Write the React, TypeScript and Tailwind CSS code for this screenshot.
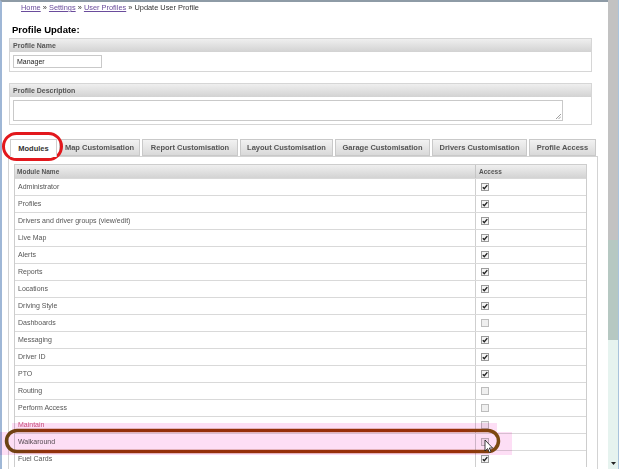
import React from 'react';

const ROWS: { name: string; on: boolean; tone?: string }[] = [
  { name: 'Administrator', on: true },
  { name: 'Profiles', on: true },
  { name: 'Drivers and driver groups (view/edit)', on: true },
  { name: 'Live Map', on: true },
  { name: 'Alerts', on: true },
  { name: 'Reports', on: true },
  { name: 'Locations', on: true },
  { name: 'Driving Style', on: true },
  { name: 'Dashboards', on: false },
  { name: 'Messaging', on: true },
  { name: 'Driver ID', on: true },
  { name: 'PTO', on: true },
  { name: 'Routing', on: false },
  { name: 'Perform Access', on: false },
  { name: 'Maintain', on: false, tone: 'text-[#c9587f]' },
  { name: 'Walkaround', on: false },
  { name: 'Fuel Cards', on: true },
];

const TABS = [
  { label: 'Modules', w: 'w-[47px]', active: true },
  { label: 'Map Customisation', w: 'w-[81px]' },
  { label: 'Report Customisation', w: 'w-[96px]' },
  { label: 'Layout Customisation', w: 'w-[93px]' },
  { label: 'Garage Customisation', w: 'w-[95px]' },
  { label: 'Drivers Customisation', w: 'w-[95px]' },
  { label: 'Profile Access', w: 'w-[67px]' },
];

function Box({ on }: { on: boolean }) {
  return (
    <svg width="8" height="8" viewBox="0 0 8 8" className="block">
      <rect x="0.5" y="0.5" width="7" height="7" fill={on ? '#f4f4f4' : '#efefef'} stroke={on ? '#9a9a9a' : '#bdbdbd'} />
      {on && <path d="M1.8 4.2 L3.3 5.8 L6.3 2.1" fill="none" stroke="#222" strokeWidth="1.4" />}
    </svg>
  );
}

function PanelHead({ children }: { children: React.ReactNode }) {
  return (
    <div className="h-[13px] bg-[linear-gradient(#efefef,#d2d2d2)] pl-[3px] text-[7px] font-bold leading-[13px] text-[#555]">
      {children}
    </div>
  );
}

export default function App() {
  return (
    <div className="relative flex h-[469px] w-[619px] overflow-hidden bg-white font-['Liberation_Sans',Arial,sans-serif]">
      <div className="w-[608px] shrink-0 border-l-2 border-t-2 border-l-[#9fb7d6] border-t-[#8e9ba6]">
        <div className="h-[12px] pl-[19px] text-[7.4px] leading-[12px] text-[#333]">
          <span className="text-[#6a4c9c] underline">Home</span> »{' '}
          <span className="text-[#6a4c9c] underline">Settings</span> »{' '}
          <span className="text-[#6a4c9c] underline">User Profiles</span> » Update User Profile
        </div>

        <div className="mt-[10px] pl-[10px] text-[9.5px] font-bold leading-[12px] text-black">Profile Update:</div>

        <div className="ml-[7px] mt-[2px] w-[583px] border border-[#d6d6d6]">
          <PanelHead>Profile Name</PanelHead>
          <div className="px-[3px] py-[3px]">
            <div className="h-[13px] w-[89px] border border-[#c9c9c9] pl-[3px] text-[7px] leading-[11px] text-[#222]">Manager</div>
          </div>
        </div>

        <div className="ml-[7px] mt-[11px] w-[583px] border border-[#d6d6d6]">
          <PanelHead>Profile Description</PanelHead>
          <div className="px-[3px] py-[3px]">
            <div className="relative h-[21px] w-[550px] border border-[#c9c9c9]">
              <svg width="6" height="6" viewBox="0 0 6 6" className="absolute bottom-[1px] right-[1px]">
                <path d="M1 6 L6 1 M3.5 6 L6 3.5" stroke="#888" strokeWidth="0.8" />
              </svg>
            </div>
          </div>
        </div>

        <div className="ml-[8px] mt-[14px] flex gap-[2px]">
          {TABS.map((t) => (
            <div
              key={t.label}
              className={
                t.active
                  ? `${t.w} relative z-10 -mb-px h-[18px] border border-b-0 border-[#cfcfcf] bg-white text-center text-[7.5px] font-bold leading-[17px] text-[#333]`
                  : `${t.w} h-[17px] border border-[#c9c9c9] bg-[linear-gradient(#f2f2f2,#d9d9d9)] text-center text-[7.5px] font-bold leading-[16px] text-[#555]`
              }
            >
              {t.label}
            </div>
          ))}
        </div>

        <div className="ml-[6px] h-[320px] w-[590px] border border-b-0 border-[#d3d3d3] pl-[5px] pt-[7px]">
          <div className="w-[573px] border border-b-0 border-[#cdcdcd]">
            <div className="grid h-[13px] grid-cols-[460px_1fr] bg-[linear-gradient(#efefef,#d3d3d3)] text-[6.5px] font-bold leading-[13px] text-[#555]">
              <div className="pl-[2px]">Module Name</div>
              <div className="border-l border-[#c6c6c6] pl-[3px]">Access</div>
            </div>
            {ROWS.map((r) => (
              <div key={r.name} className="grid h-[17px] grid-cols-[460px_1fr] border-t border-[#d9d9d9] text-[7px] leading-[16px]">
                <div className={`pl-[3px] ${r.tone ?? 'text-[#555]'}`}>{r.name}</div>
                <div className="flex items-center border-l border-[#cfcfcf] pl-[5px]">
                  <Box on={r.on} />
                </div>
              </div>
            ))}
          </div>
        </div>
      </div>

      <div className="flex-1" />

      <div className="flex w-[11px] shrink-0 flex-col border-r border-r-[#a9c3dc]">
        <div className="h-[240px] bg-[#c2c2c2]" />
        <div className="h-[100px] bg-[#b6c8c2]" />
        <div className="flex flex-1 items-end justify-center bg-[#e6f3ef] pb-[4px]">
          <svg width="5" height="3" viewBox="0 0 5 3">
            <path d="M0 0 L5 0 L2.5 3 Z" fill="#222" />
          </svg>
        </div>
      </div>

      {/* annotations */}
      <div className="pointer-events-none absolute left-[12px] top-[423px] h-[9px] w-[485px] bg-[#fcc8ee] opacity-60 mix-blend-multiply" />
      <div className="pointer-events-none absolute left-0 top-[432px] h-[23px] w-[512px] bg-[#fcc8ee] opacity-60 mix-blend-multiply" />
      <svg className="pointer-events-none absolute left-0 top-0" width="619" height="469" viewBox="0 0 619 469">
        <defs>
          <linearGradient id="brown" x1="0" x2="1" y1="0" y2="0">
            <stop offset="0" stopColor="#6a4412" />
            <stop offset="0.08" stopColor="#92300b" />
            <stop offset="0.92" stopColor="#9a2f0a" />
            <stop offset="1" stopColor="#7a4a10" />
          </linearGradient>
        </defs>
        <rect x="3.5" y="133.5" width="58" height="26" rx="13" fill="none" stroke="#e2181d" strokeWidth="3" />
        <rect x="6.5" y="430.5" width="492" height="21" rx="10.5" fill="none" stroke="url(#brown)" strokeWidth="3.5" />
        <path d="M485 440 L485 451 L487.6 448.6 L489.4 452.4 L491 451.7 L489.3 448 L492.6 448 Z" fill="#fff" stroke="#111" strokeWidth="0.8" strokeLinejoin="round" />
      </svg>
    </div>
  );
}
